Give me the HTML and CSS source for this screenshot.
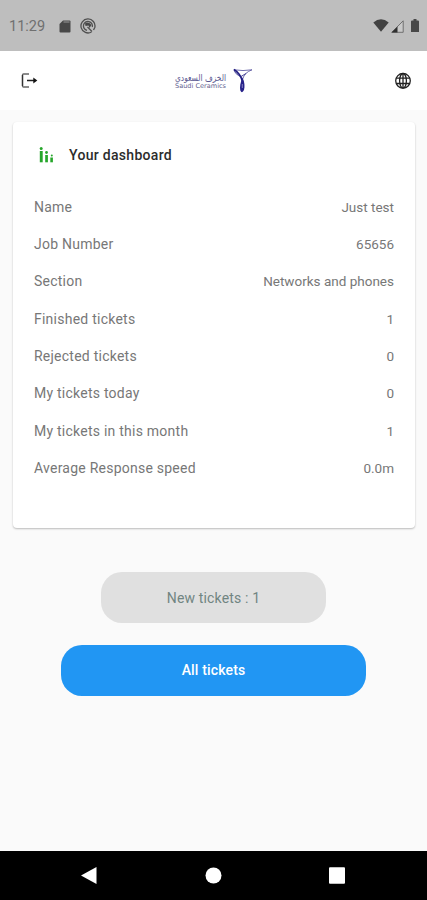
FILE: index.html
```html
<!DOCTYPE html>
<html lang="en">
<head>
<meta charset="utf-8">
<meta name="viewport" content="width=device-width, initial-scale=1">
<title>Your dashboard</title>
<link rel="stylesheet" href="styles.css">
</head>
<body>
<div class="screen">
  <div class="status">
    <span class="clock">11:29</span>
    <svg class="sd" width="12" height="14" viewBox="0 0 12 14"><path d="M4 .5h6.500q1 0 1 1v10q0 1-1 1h-9q-1 0-1-1V4z" fill="#484848"/><path d="M4.500 2h6" stroke="#999" stroke-width="1"/></svg>
    <svg class="sync" width="16" height="16" viewBox="0 0 16 16" fill="none" stroke="#505050" stroke-width="1.300"><path d="M11.500 14A7 7 0 1 1 14.800 9.500L13.500 12"/><path d="M7 12.300A4.500 4.500 0 1 1 12.300 9"/><path d="M5 5.500Q8 3 11.500 7L9.500 10 8.500 7.500 5.500 8z" fill="#484848" stroke="none"/><path d="M7.500 9l4.500 4.500"/></svg>
    <svg class="wifi" width="16" height="13" viewBox="0 0 16 13"><path d="M.3 3.500Q8-2.800 15.700 3.500L8 12.700z" fill="#424242"/></svg>
    <svg class="signal" width="13" height="13" viewBox="0 0 13 13"><path d="M.8 12.300L12.200.8v11.500z" fill="#c9c9c9" stroke="#666" stroke-width=".9"/><path d="M.5 12.500L6.500 6.500v6z" fill="#303030"/></svg>
    <svg class="battery" width="8" height="14" viewBox="0 0 8 14"><path d="M2.500 0h3v1.500H7q1 0 1 1V13H0V2.500q0-1 1-1h1.500z" fill="#484848"/></svg>
  </div>
  <header class="appbar">
    <svg width="18" height="18" viewBox="0 0 18 18" fill="none" stroke="#222" stroke-width="1.300"><path d="M9 2H3.500Q2.500 2 2.500 3v11q0 1 1 1H9" stroke="#666"/><path d="M2.500 3v11" stroke="#333"/><path d="M7 8.500h8" stroke-width="1.500"/><path d="M13.300 5.500l4 3-4 3z" fill="#111" stroke="none"/></svg>
    <svg class="logo" width="80" height="28" viewBox="0 0 80 28">
      <text x="1" y="13.500" class="logo-ar" textLength="51" lengthAdjust="spacingAndGlyphs">الخزف السعودي</text>
      <text x="1" y="21" class="logo-en" textLength="51" lengthAdjust="spacingAndGlyphs">Saudi Ceramics</text>
      <path d="M60 2.800Q69 4.300 78 2.800Q70.500 5.500 68.700 12" fill="none" stroke="#625fa5" stroke-width=".9"/>
      <path d="M60 2.500Q61 7.500 67 9.500L72 6.500" fill="none" stroke="#37348c" stroke-width=".9"/>
      <path d="M60 2.500Q66.500 6.500 68.700 15" fill="none" stroke="#211c80" stroke-width="1.600"/>
      <path d="M68.500 10.500Q71.500 17 70 23Q68 27 66.300 23.500Q65.300 18 68.500 10.500z" fill="#27228a"/>
      <path d="M68.300 17v4" stroke="#8884c2"/>
    </svg>
    <svg width="18" height="18" viewBox="0 0 18 18" fill="none" stroke="#222" stroke-width="1.300"><circle cx="9" cy="8.800" r="7.300"/><ellipse cx="9" cy="8.800" rx="3.400" ry="7.300"/><path d="M2.300 6.100h13.400M2.300 11.500h13.400M9 2v14"/></svg>
  </header>
  <main class="content">
    <section class="card">
      <div class="heading">
        <svg width="16" height="16" viewBox="0 0 16 16" fill="#26a62b"><circle cx="2.200" cy="1.500" r="1.500"/><rect x=".8" y="4" width="2.900" height="11.300"/><circle cx="7.500" cy="5.500" r="1.400"/><rect x="6.200" y="8" width="2.700" height="7.300"/><circle cx="12.800" cy="8.500" r="1"/><rect x="11.300" y="10.500" width="2.600" height="4.800"/></svg>
        <h1>Your dashboard</h1>
      </div>
      <dl>
        <div><dt>Name</dt><dd>Just test</dd></div>
        <div><dt>Job Number</dt><dd>65656</dd></div>
        <div><dt>Section</dt><dd>Networks and phones</dd></div>
        <div><dt>Finished tickets</dt><dd>1</dd></div>
        <div><dt>Rejected tickets</dt><dd>0</dd></div>
        <div><dt>My tickets today</dt><dd>0</dd></div>
        <div><dt>My tickets in this month</dt><dd>1</dd></div>
        <div><dt>Average Response speed</dt><dd>0.0m</dd></div>
      </dl>
    </section>
    <button class="new">New tickets : 1</button>
    <button class="all">All tickets</button>
  </main>
  <nav class="navbar">
    <svg width="18" height="18" viewBox="0 0 18 18"><path d="M1 8.500L16.500 0v17z" fill="#fff"/></svg>
    <svg width="18" height="18" viewBox="0 0 18 18"><circle cx="9.500" cy="8.500" r="8" fill="#fff"/></svg>
    <svg width="18" height="18" viewBox="0 0 18 18"><rect x="1" y=".3" width="16" height="16.500" rx="1" fill="#fff"/></svg>
  </nav>
</div>
</body>
</html>
```
FILE: styles.css
```css
* { box-sizing: border-box; }
body { margin: 0; font-family: Roboto, sans-serif; background: #fafafa; }
svg { display: block; flex: none; }
.screen { width: 427px; height: 900px; display: flex; flex-direction: column; overflow: hidden; }
.status { height: 51px; background: #bebebe; display: flex; align-items: center; padding: 2px 8px 0 9px; flex: none; }
.clock { font-size: 14.5px; color: #707070; width: 50px; }
.sync { margin: -1px 0 0 9px; }
.wifi { margin: -2px 0 0 auto; }
.signal { margin-left: 2px; }
.battery { margin: -1px 0 0 7px; }
.appbar { height: 59px; background: #fff; display: flex; align-items: center; justify-content: space-between; padding: 0 15px 0 20px; flex: none; }
.logo { margin-left: -4px; }
.logo-ar { font: 9px "DejaVu Sans", sans-serif; fill: #5a5890; }
.logo-en { font: 6.5px "DejaVu Sans", sans-serif; fill: #64628f; }
.content { flex: 1; display: flex; flex-direction: column; align-items: center; padding: 12px 12px 0 13px; }
.card { width: 100%; height: 406px; background: #fff; border-radius: 4px; box-shadow: 0 1px 2px rgba(0,0,0,.26); padding: 19px 21px 0; }
.heading { display: flex; align-items: center; height: 28px; padding-left: 5px; gap: 14px; }
h1 { margin: 0; font-size: 14px; font-weight: 500; color: #2c2c2c; letter-spacing: .3px; }
dl { margin: 19px 0 0; }
dl div { display: flex; justify-content: space-between; align-items: center; height: 37.35px; font-size: 14px; color: #777; }
dt { letter-spacing: .24px; }
dd { margin: 0; font-size: 13.5px; letter-spacing: 0; }
button { border: 0; padding: 0; height: 51px; border-radius: 21px; font: 14px Roboto, sans-serif; letter-spacing: .15px; }
.new { width: 225px; margin: 44px 1px 0 0; background: #e0e0e0; color: #718582; }
.all { width: 305px; margin: 21.5px 1px 0 0; background: #2196f3; color: #fff; font-weight: 500; }
.navbar { height: 49px; background: #000; display: flex; justify-content: space-between; align-items: center; padding: 0 81px 0 80px; flex: none; }
```
